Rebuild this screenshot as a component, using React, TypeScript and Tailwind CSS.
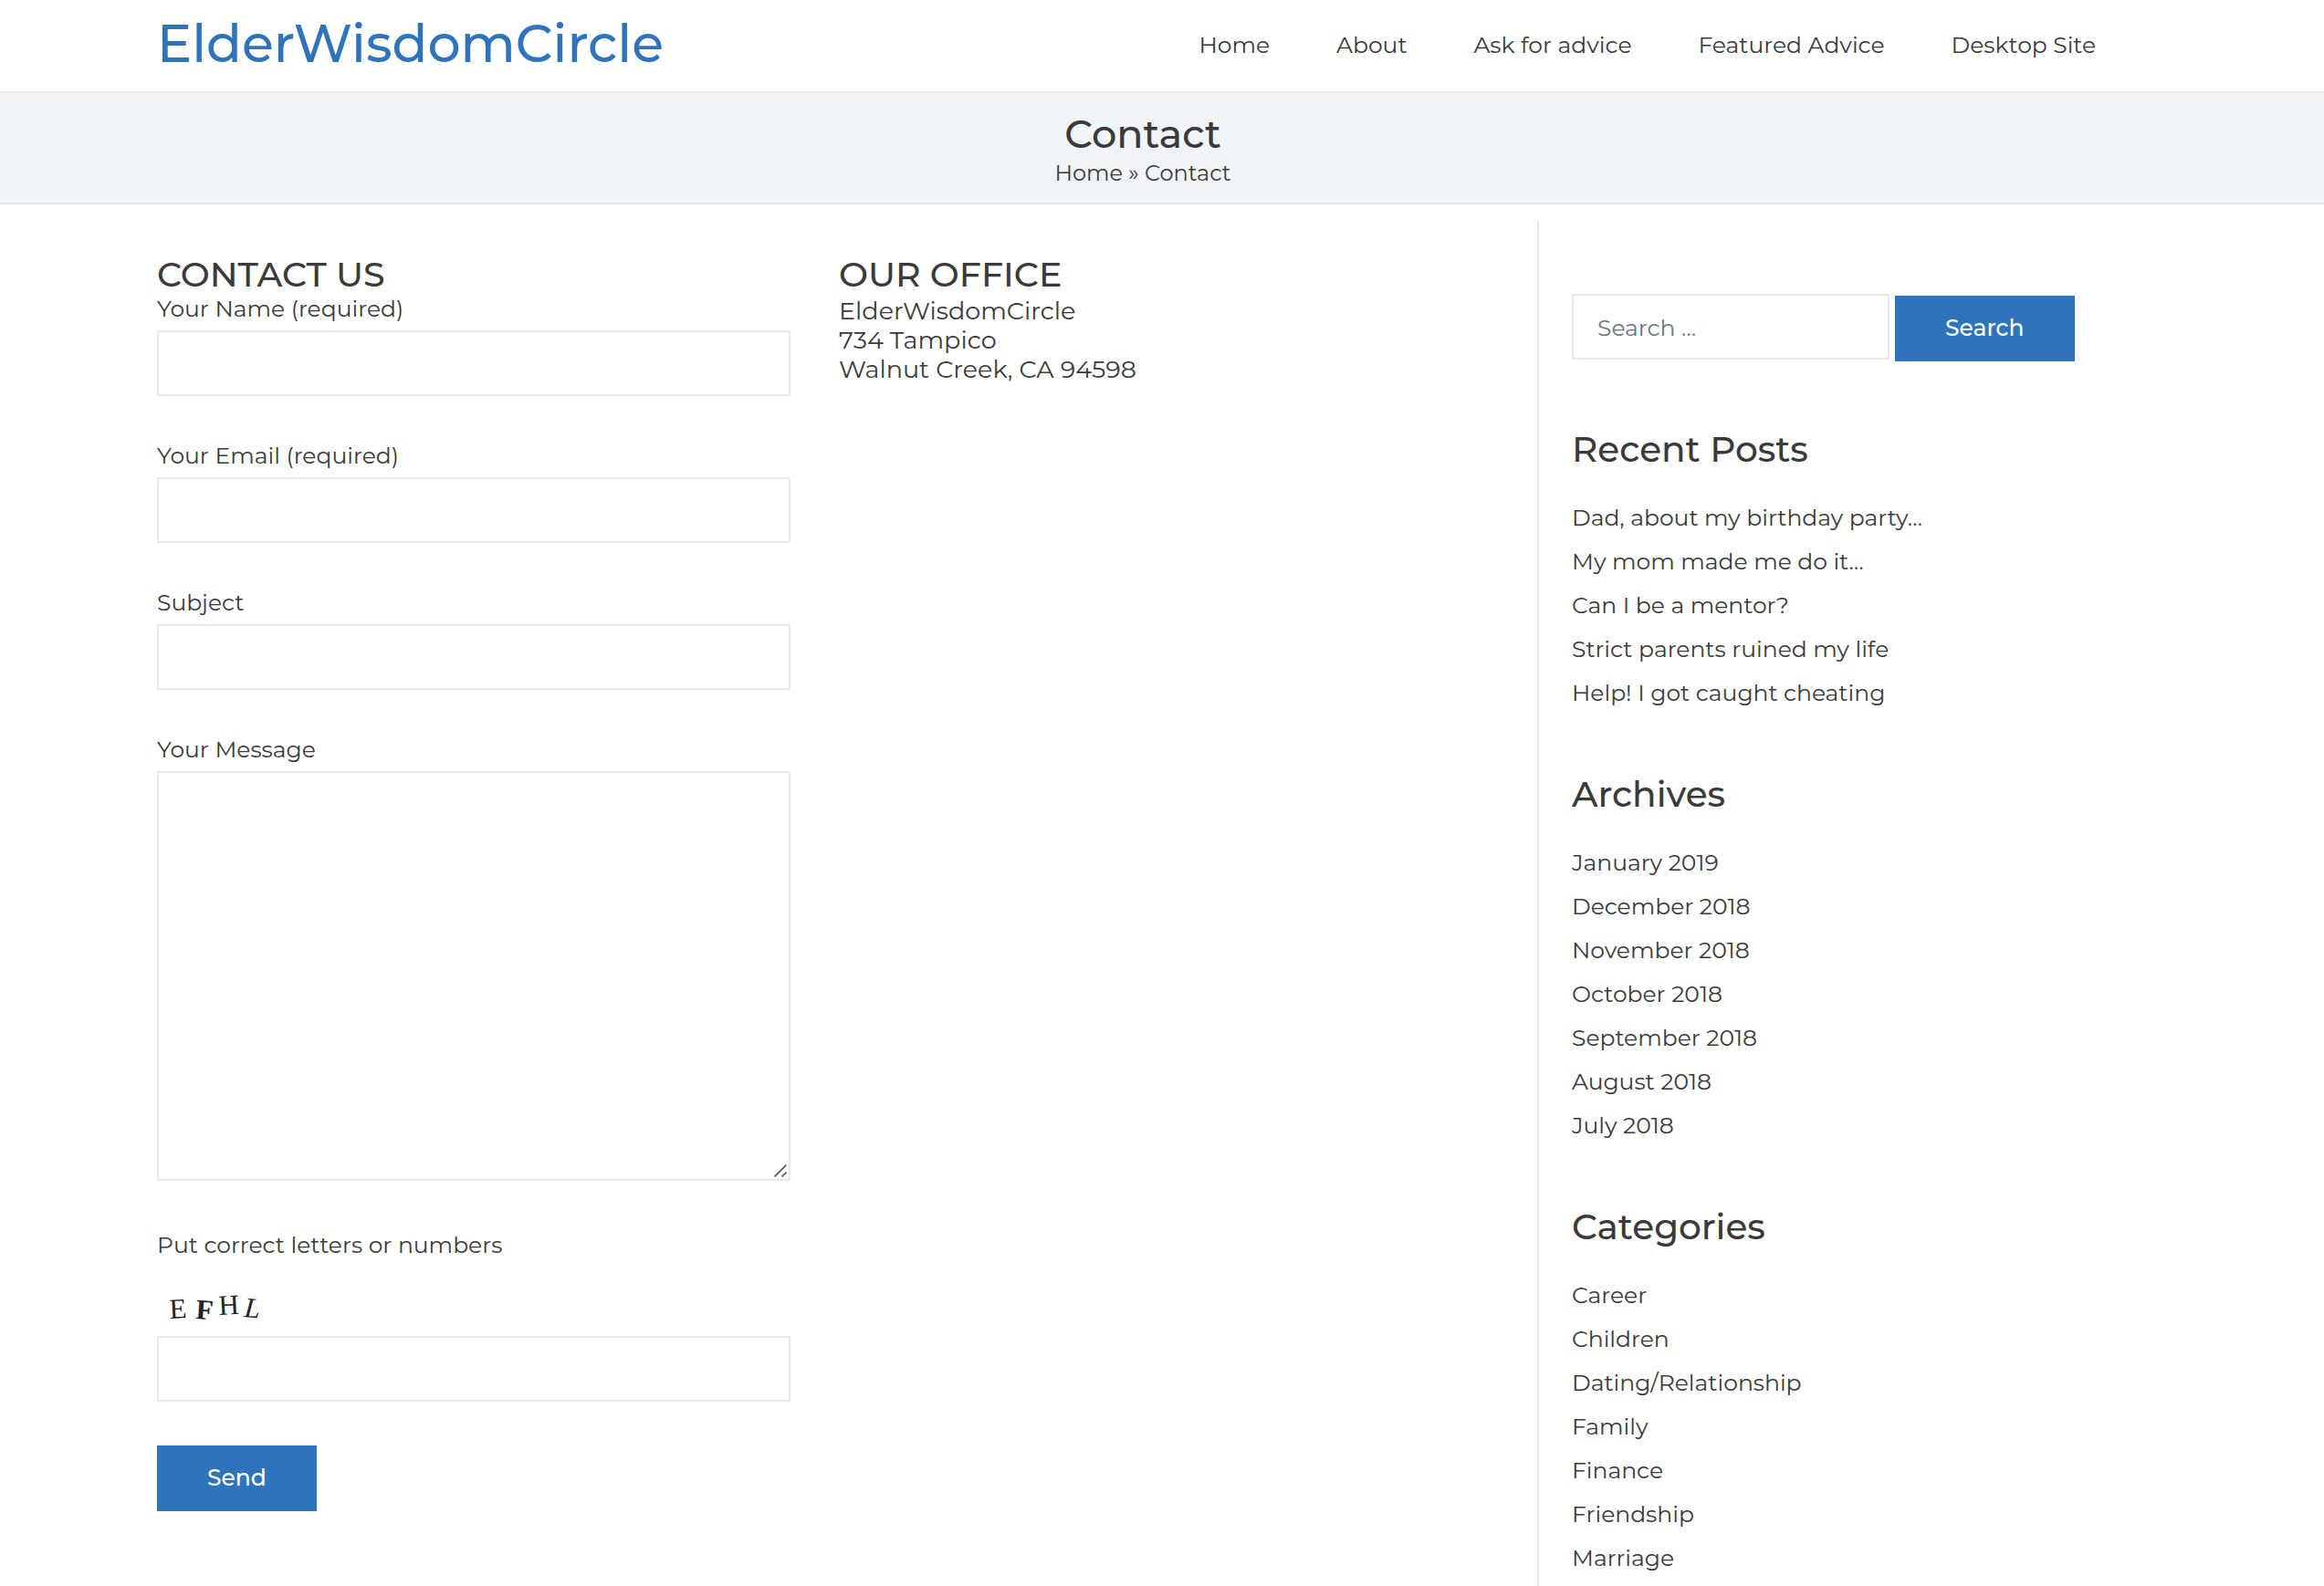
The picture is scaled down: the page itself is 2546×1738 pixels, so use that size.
import React from 'react';

const navItems = ['Home', 'About', 'Ask for advice', 'Featured Advice', 'Desktop Site'];

const sections = [
  {
    title: 'Recent Posts',
    items: [
      'Dad, about my birthday party…',
      'My mom made me do it…',
      'Can I be a mentor?',
      'Strict parents ruined my life',
      'Help! I got caught cheating',
    ],
  },
  {
    title: 'Archives',
    items: [
      'January 2019',
      'December 2018',
      'November 2018',
      'October 2018',
      'September 2018',
      'August 2018',
      'July 2018',
    ],
  },
  {
    title: 'Categories',
    items: ['Career', 'Children', 'Dating/Relationship', 'Family', 'Finance', 'Friendship', 'Marriage'],
  },
];

const fieldBox = 'block w-full border-2 border-[#e8e8e8] bg-white px-7 outline-none';

function Field({ id, label, type = 'text' }: { id: string; label: string; type?: string }) {
  return (
    <div className="mb-[49px]">
      <label htmlFor={id} className="block h-10 leading-8">
        {label}
      </label>
      <input id={id} type={type} className={`${fieldBox} h-[72px]`} />
    </div>
  );
}

function Captcha() {
  return (
    <svg
      role="img"
      aria-label="Captcha"
      viewBox="0 0 144 66"
      className="h-[66px] w-36"
      fontFamily="'Liberation Serif', serif"
      fontSize="31"
      fill="#222"
    >
      <text x="14" y="47" transform="rotate(-3 14 47)">E</text>
      <text x="42" y="47" fontWeight="700" transform="rotate(4 42 47)">F</text>
      <text x="68" y="43" transform="rotate(-3 68 43)">H</text>
      <text x="95" y="45" fontStyle="italic" transform="rotate(5 95 45)">L</text>
    </svg>
  );
}

function ResizeGrip() {
  return (
    <svg
      aria-hidden="true"
      viewBox="0 0 14 14"
      className="pointer-events-none absolute right-1 bottom-1 size-[14px]"
      stroke="#555"
      strokeWidth="1.6"
    >
      <path d="M0.5 13.5 13.5 0.5M8.5 13.5l5-5" />
    </svg>
  );
}

export default function App() {
  return (
    <div className="h-screen overflow-hidden bg-white font-['Montserrat','Inter',sans-serif] text-[25px] text-[#3a3a3a]">
      <header className="border-b-2 border-[#eceef0] pr-[42px]">
        <div className="mx-auto flex h-[100px] max-w-[2160px] items-center justify-between pb-[2px]">
          <a href="#" className="pb-[2px] text-[57px] leading-[92px] font-medium text-[#2d74ba]">
            ElderWisdomCircle
          </a>
          <nav className="flex gap-px">
            {navItems.map((item) => (
              <a key={item} href="#" className="px-9 leading-10">
                {item}
              </a>
            ))}
          </nav>
        </div>
      </header>

      <div className="border-b-2 border-[#e6e7e8] bg-[#f1f5f8] pr-[42px] text-center">
        <div className="h-[120px] pt-[19px]">
          <h1 className="text-[43px] leading-[52px] font-medium">Contact</h1>
          <p className="text-[24px] leading-[34px]">
            <a href="#">Home</a> » Contact
          </p>
        </div>
      </div>

      <div className="pr-[42px] pt-[18px]">
        <div className="mx-auto flex max-w-[2160px]">
          <main className="grid w-[70%] grid-cols-2 items-start gap-[53px] pt-[38px] pr-[71px]">
            <form onSubmit={(e) => e.preventDefault()}>
              <h2 className="text-[38px] leading-[42px] font-medium">CONTACT US</h2>
              <Field id="name" label="Your Name (required)" />
              <Field id="email" label="Your Email (required)" type="email" />
              <Field id="subject" label="Subject" />
              <div className="mb-[54px]">
                <label htmlFor="message" className="block h-10 leading-8">
                  Your Message
                </label>
                <div className="relative">
                  <textarea
                    id="message"
                    className={`${fieldBox} h-[449px] resize-y [&::-webkit-resizer]:hidden`}
                  />
                  <ResizeGrip />
                </div>
              </div>
              <label htmlFor="captcha" className="block h-[50px] leading-8">
                Put correct letters or numbers
              </label>
              <div className="flex">
                <Captcha />
              </div>
              <input id="captcha" type="text" className={`${fieldBox} h-[72px]`} />
              <button type="submit" className="mt-12 h-[72px] bg-[#2d74ba] px-[55px] font-medium text-white">
                Send
              </button>
            </form>
            <section>
              <h2 className="text-[38px] leading-[42px] font-medium">OUR OFFICE</h2>
              <address className="mt-[3px] text-[27px] leading-8 not-italic">
                ElderWisdomCircle
                <br />
                734 Tampico
                <br />
                Walnut Creek, CA 94598
              </address>
            </section>
          </main>

          <aside className="w-[30%] border-l-2 border-[#e8e8e8] pt-20 pl-9">
            <form className="flex gap-[6px]" onSubmit={(e) => e.preventDefault()}>
              <input
                type="search"
                aria-label="Search"
                placeholder="Search …"
                className="h-[72px] w-[348px] border-2 border-[#e8e8e8] px-[26px] pt-[2px] outline-none placeholder:text-[#6c757d]"
              />
              <button type="submit" className="mt-[2px] h-[72px] bg-[#2d74ba] px-[55px] font-medium text-white">
                Search
              </button>
            </form>
            <div className="pt-[70px]">
              {sections.map((section) => (
                <section key={section.title} className="mb-[61px]">
                  <h3 className="mb-[25px] text-[39px] leading-[52px] font-medium">{section.title}</h3>
                  <ul>
                    {section.items.map((item) => (
                      <li key={item} className="leading-[48px]">
                        <a href="#">{item}</a>
                      </li>
                    ))}
                  </ul>
                </section>
              ))}
            </div>
          </aside>
        </div>
      </div>
    </div>
  );
}
